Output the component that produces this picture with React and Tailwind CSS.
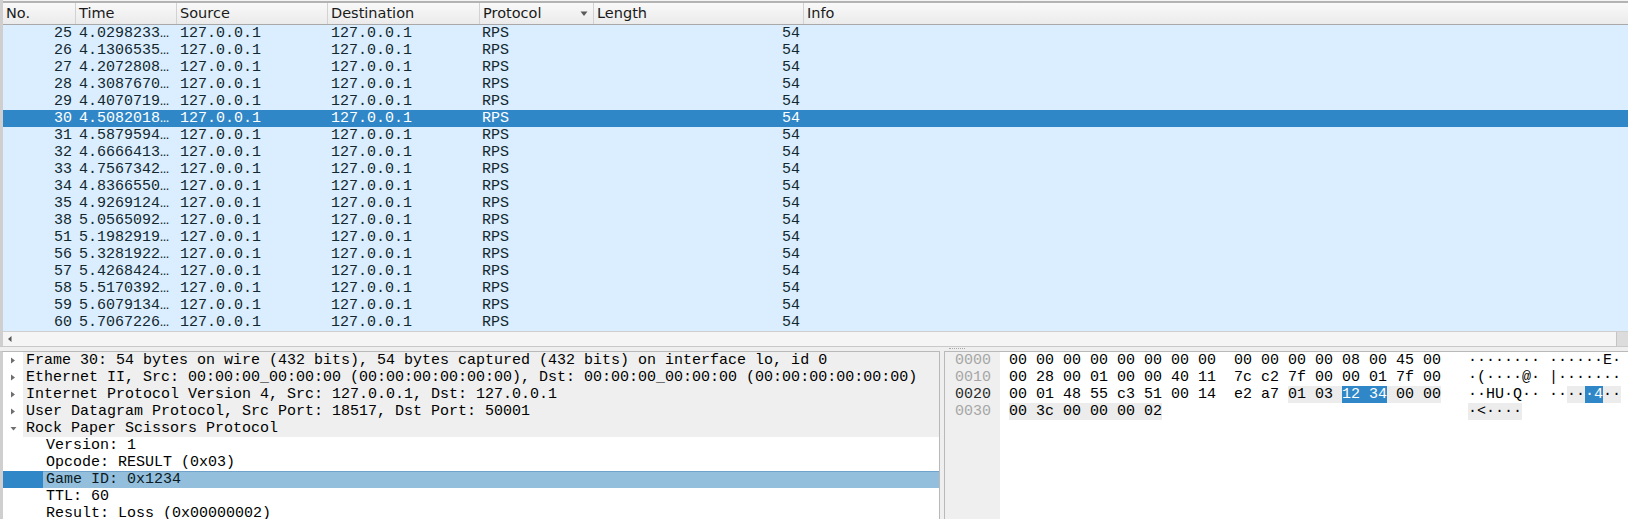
import React from "react";

const mono = { fontFamily: '"Liberation Mono", "DejaVu Sans Mono", monospace' };
const sans = { fontFamily: '"DejaVu Sans", "Liberation Sans", sans-serif' };

const packets = [
  [25, "4.0298233…"],
  [26, "4.1306535…"],
  [27, "4.2072808…"],
  [28, "4.3087670…"],
  [29, "4.4070719…"],
  [30, "4.5082018…"],
  [31, "4.5879594…"],
  [32, "4.6666413…"],
  [33, "4.7567342…"],
  [34, "4.8366550…"],
  [35, "4.9269124…"],
  [38, "5.0565092…"],
  [51, "5.1982919…"],
  [56, "5.3281922…"],
  [57, "5.4268424…"],
  [58, "5.5170392…"],
  [59, "5.6079134…"],
  [60, "5.7067226…"],
];

function TriRight() {
  return (
    <svg width="10" height="17" viewBox="0 0 10 17" className="shrink-0">
      <path d="M4 5.5 L8 8.5 L4 11.5 Z" fill="#6e6e6e" />
    </svg>
  );
}
function TriDown() {
  return (
    <svg width="10" height="17" viewBox="0 0 10 17" className="shrink-0">
      <path d="M2.5 7 L8.5 7 L5.5 10.5 Z" fill="#6e6e6e" />
    </svg>
  );
}

function HeaderCell({ w, children, first, right }) {
  return (
    <div
      className={
        "h-full flex items-center shrink-0 relative " +
        (first ? "pl-[3px]" : "border-l border-[#d2d2d2] pl-[3px]")
      }
      style={{ width: w }}
    >
      {children}
      {right}
    </div>
  );
}

const hexRows = [
  {
    off: "0000",
    cur: false,
    parts: [{ t: "00 00 00 00 00 00 00 00  00 00 00 00 08 00 45 00" }],
    ascii: [{ t: "········ ······E·" }],
  },
  {
    off: "0010",
    cur: false,
    parts: [{ t: "00 28 00 01 00 00 40 11  7c c2 7f 00 00 01 7f 00" }],
    ascii: [{ t: "·(····@· |·······" }],
  },
  {
    off: "0020",
    cur: true,
    parts: [
      { t: "00 01 48 55 c3 51 00 14  e2 a7 " },
      { t: "01 03 ", g: true },
      { t: "12 34", b: true },
      { t: " 00 00", g: true },
    ],
    ascii: [
      { t: "··HU·Q·· ··" },
      { t: "··", g: true },
      { t: "·4", b: true },
      { t: "··", g: true },
    ],
  },
  {
    off: "0030",
    cur: false,
    parts: [{ t: "00 3c 00 00 00 02", g: true }],
    ascii: [{ t: "·<····", g: true }],
  },
];

function Seg({ s }) {
  const cls = s.b
    ? "bg-[#3087c7] text-white"
    : s.g
    ? "bg-[#ececec]"
    : "";
  return <span className={cls + " whitespace-pre"}>{s.t}</span>;
}

export default function App() {
  const cols = [72, 101, 151, 152, 114, 210, 825];
  return (
    <div
      className="w-[1628px] h-[519px] overflow-hidden bg-[#efefef] flex flex-col text-[15px]"
      style={mono}
    >
      {/* Packet list */}
      <div className="flex flex-col border-l-[3px] border-[#cfcfcf] pt-px bg-[#f4f4f4]">
        <div
          className="h-[24px] flex border-t-2 border-[#b3b3b3] border-b border-b-[#a9a9a9] bg-gradient-to-b from-[#f9f9f9] to-[#ebebeb] text-[14.5px] text-[#1a1a1a]"
          style={sans}
        >
          <HeaderCell w={cols[0]} first>No.</HeaderCell>
          <HeaderCell w={cols[1]}>Time</HeaderCell>
          <HeaderCell w={cols[2]}>Source</HeaderCell>
          <HeaderCell w={cols[3]}>Destination</HeaderCell>
          <HeaderCell
            w={cols[4]}
            right={
              <svg width="8" height="6" viewBox="0 0 8 6" className="absolute right-[5px] top-[8px]">
                <path d="M0.5 0.5 L7.5 0.5 L4 5 Z" fill="#5a5a5a" />
              </svg>
            }
          >
            Protocol
          </HeaderCell>
          <HeaderCell w={cols[5]}>Length</HeaderCell>
          <div className="flex-1 h-full flex items-center border-l border-[#d2d2d2] pl-[3px]">Info</div>
        </div>
        <div className="flex flex-col">
          {packets.map(([no, t]) => {
            const sel = no === 30;
            return (
              <div
                key={no}
                className={
                  "h-[17px] leading-[17px] flex whitespace-pre " +
                  (sel ? "bg-[#3087c7] text-white" : "bg-[#daeeff] text-[#12272e]")
                }
              >
                <div className="shrink-0 text-right pr-[3px]" style={{ width: cols[0] }}>{no}</div>
                <div className="shrink-0 pl-[4px]" style={{ width: cols[1] }}>{t}</div>
                <div className="shrink-0 pl-[4px]" style={{ width: cols[2] }}>127.0.0.1</div>
                <div className="shrink-0 pl-[4px]" style={{ width: cols[3] }}>127.0.0.1</div>
                <div className="shrink-0 pl-[3px]" style={{ width: cols[4] }}>RPS</div>
                <div className="shrink-0 text-right pr-[3px]" style={{ width: cols[5] }}>54</div>
                <div className="flex-1" />
              </div>
            );
          })}
        </div>
        {/* horizontal scrollbar */}
        <div className="h-[15px] flex border-t border-[#cfcfcf] bg-[#f5f5f5]">
          <div className="w-[14px] flex items-center justify-center">
            <svg width="6" height="8" viewBox="0 0 6 8">
              <path d="M4.5 1 L1 4 L4.5 7 Z" fill="#555" />
            </svg>
          </div>
          <div className="flex-1" />
          <div className="w-[12px] bg-[#dcdcdc] border-l border-[#c4c4c4]" />
        </div>
      </div>

      {/* splitter */}
      <div className="h-[5px] border-t border-[#c9c9c9] bg-[#efefef] relative">
        <div className="absolute left-[949px] top-[1px] w-[16px] border-t border-dotted border-[#a8a8a8]" />
      </div>

      {/* Bottom panes */}
      <div className="flex-1 flex min-h-0">
        {/* Tree */}
        <div className="w-[940px] shrink-0 bg-white border-l-[3px] border-l-[#cfcfcf] border-t border-t-[#b9b9b9] border-r border-r-[#b9b9b9] text-black flex flex-col whitespace-pre">
          {[
            "Frame 30: 54 bytes on wire (432 bits), 54 bytes captured (432 bits) on interface lo, id 0",
            "Ethernet II, Src: 00:00:00_00:00:00 (00:00:00:00:00:00), Dst: 00:00:00_00:00:00 (00:00:00:00:00:00)",
            "Internet Protocol Version 4, Src: 127.0.0.1, Dst: 127.0.0.1",
            "User Datagram Protocol, Src Port: 18517, Dst Port: 50001",
          ].map((t) => (
            <div key={t} className="h-[17px] leading-[17px] flex">
              <div className="w-[20px] flex justify-end pr-[6px] items-center">
                <TriRight />
              </div>
              <div className="flex-1 bg-[#efefef] pl-[3px]">{t}</div>
            </div>
          ))}
          <div className="h-[17px] leading-[17px] flex">
            <div className="w-[20px] flex justify-end pr-[5px] items-center">
              <TriDown />
            </div>
            <div className="flex-1 bg-[#efefef] pl-[3px]">Rock Paper Scissors Protocol</div>
          </div>
          <div className="h-[17px] leading-[17px] pl-[43px]">Version: 1</div>
          <div className="h-[17px] leading-[17px] pl-[43px]">Opcode: RESULT (0x03)</div>
          <div className="h-[17px] leading-[17px] flex">
            <div className="w-[40px] bg-[#3087c7]" />
            <div className="flex-1 bg-[#93bfdc] border-t border-[#6fa3cb] leading-[16px] pl-[3px] text-[#0c1a24]">
              Game ID: 0x1234
            </div>
          </div>
          <div className="h-[17px] leading-[17px] pl-[43px]">TTL: 60</div>
          <div className="h-[17px] leading-[17px] pl-[43px]">Result: Loss (0x00000002)</div>
        </div>

        {/* gap */}
        <div className="w-[4px] shrink-0 bg-[#efefef]" />

        {/* Hex */}
        <div className="flex-1 flex bg-white border-l border-l-[#b9b9b9] border-t border-t-[#b9b9b9] whitespace-pre">
          <div className="w-[55px] shrink-0 bg-[#efefef] flex flex-col pl-[10px]">
            {hexRows.map((r) => (
              <div
                key={r.off}
                className={"h-[17px] leading-[17px] " + (r.cur ? "text-[#2a2a2a]" : "text-[#a6a6a6]")}
              >
                {r.off}
              </div>
            ))}
          </div>
          <div className="flex flex-col pl-[9px] text-black">
            {hexRows.map((r) => (
              <div key={r.off} className="h-[17px] leading-[17px] flex">
                <div className="w-[459px] shrink-0">
                  {r.parts.map((s, i) => (
                    <Seg key={i} s={s} />
                  ))}
                </div>
                <div>
                  {r.ascii.map((s, i) => (
                    <Seg key={i} s={s} />
                  ))}
                </div>
              </div>
            ))}
          </div>
        </div>
      </div>
    </div>
  );
}
